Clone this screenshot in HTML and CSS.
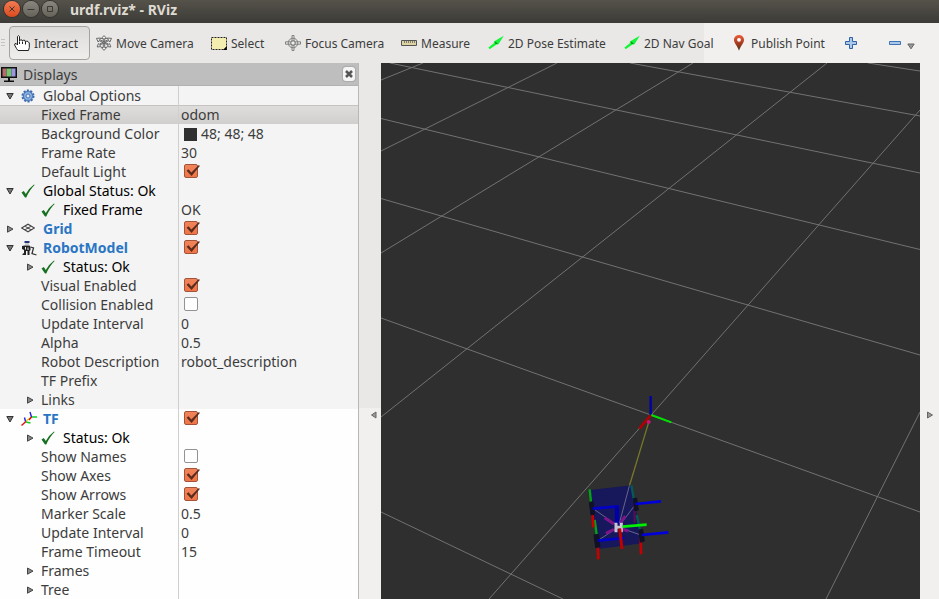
FILE: index.html
```html
<!DOCTYPE html>
<html lang="en">
<head>
<meta charset="utf-8">
<title>urdf.rviz* - RViz</title>
<link rel="stylesheet" href="styles.css">
</head>
<body>
<svg class="defs" aria-hidden="true">
  <symbol id="check" viewBox="0 0 14 14"><path d="M.5 8.500 2.800 7 4.800 10Q8 4 13 .4L13.600 1.100Q9 5.500 5.300 13.400L4 13.400Z" fill="#17701f"/></symbol>
  <symbol id="open" viewBox="0 0 8 8"><path d="M.8 1.500H7.200L4 7Z" fill="#777" stroke="#333" stroke-width="1"/></symbol>
  <symbol id="closed" viewBox="0 0 8 8"><path d="M1.500 1V7.200L7 4.100Z" fill="#888" stroke="#444" stroke-width="1"/></symbol>
  <symbol id="arrow" viewBox="0 0 16 16"><path d="M.4 12.600 6 8 5.800 6.500 15.800.8 10.500 9.200 8.600 9.400 1.600 14.200Z" fill="#16f43a"/><path d="M6.800 6.200 10 8.800 7.500 9Z" fill="#067d18"/></symbol>
</svg>

<header class="titlebar">
  <button class="win close" aria-label="Close"><svg viewBox="0 0 16 16"><path d="M5.500 5.500 10.500 10.500M10.500 5.500 5.500 10.500"/></svg></button>
  <button class="win" aria-label="Minimize"><svg viewBox="0 0 16 16"><path d="M4.500 8.500H11.500"/></svg></button>
  <button class="win" aria-label="Maximize"><svg viewBox="0 0 16 16"><path d="M5.500 5.500H10.500V10.500H5.500Z"/></svg></button>
  <h1>urdf.rviz* - RViz</h1>
</header>

<nav class="toolbar" aria-label="Tools">
  <span class="grip"></span>
  <button class="tool active"><svg viewBox="0 0 16 16"><path d="M3.500 10V1.500Q4.500-.3 5.500 1.500V6L6.500 4.800 8 5 8.500 6 9.500 5 11 5.500 11.500 7 12.500 6 14 6.500 15.300 8V12.500L14.500 15.500H4L2.500 13.500.6 10 1 8.600 2.300 8.600Z" fill="#fff" stroke="#222"/><path d="M5.500 6.500V9M8.500 6.500V9M11.500 7V9.500" stroke="#222" fill="none"/></svg>Interact</button>
  <button class="tool"><svg viewBox="0 0 16 16"><g fill="#f4f4f4" stroke="#5a5a5a" stroke-width=".9"><path d="M7.300 3.500H5.300L8 .6 10.700 3.500H8.700V12.500H10.700L8 15.400 5.300 12.500H7.300Z"/><path d="M3 5.500 12.200 10 11.200 11.600 14.800 12 13.600 8.600 12.800 9.300 3.600 4.600 4.600 3 .5 3.400 2.200 7Z"/><path d="M13 5.500 3.800 10 4.800 11.600 1.200 12 2.400 8.600 3.200 9.300 12.400 4.600 11.400 3 15.500 3.400 13.800 7Z"/></g></svg>Move Camera</button>
  <button class="tool"><svg viewBox="0 0 16 16"><path d="M.5 2.500H15.500V14.500H.5Z" fill="#f3edb0" stroke="#222" stroke-dasharray="2 1"/><path d="M15.800 11V15H12Z"/></svg>Select</button>
  <button class="tool"><svg viewBox="0 0 16 16"><g fill="none" stroke="#808080"><path d="M7 .5H9V6.800H15.500V9.200H9V15.500H7V9.200H.5V6.800H7Z" fill="#eee"/><circle cx="8" cy="8" r="4.800"/><circle cx="8" cy="8" r="2.400"/></g></svg>Focus Camera</button>
  <button class="tool"><svg viewBox="0 0 16 16"><path d="M.5 5.500H15.500V10.500H.5Z" fill="#ddd3a0" stroke="#555"/><path d="M3.500 6V8M5.500 6V8M7.500 6V8M9.500 6V8M11.500 6V8M13.500 6V8" stroke="#666" stroke-width=".8"/></svg>Measure</button>
  <button class="tool"><svg><use href="#arrow"/></svg>2D Pose Estimate</button>
  <button class="tool"><svg><use href="#arrow"/></svg>2D Nav Goal</button>
  <button class="tool"><svg viewBox="0 0 16 16"><defs><linearGradient id="pin" x1="0" y1="0" x2="0" y2="1"><stop offset="0" stop-color="#ef5c3c"/><stop offset=".55" stop-color="#a23a20"/><stop offset="1" stop-color="#4a3010"/></linearGradient></defs><path d="M8 0C5 0 3 2.200 3 5 3 8 6.500 11 8 15.800 9.500 11 13 8 13 5 13 2.200 11 0 8 0Z" fill="url(#pin)"/><circle cx="8" cy="4.800" r="1.900" fill="#fff"/></svg>Publish Point</button>
  <button class="tool" aria-label="Add tool"><svg viewBox="0 0 16 16"><path d="M6.500 2.500H9.500V6.500H13.500V9.500H9.500V13.500H6.500V9.500H2.500V6.500H6.500Z" fill="#a9c8ea" stroke="#2f62a5"/></svg></button>
  <button class="tool" aria-label="Remove tool"><svg viewBox="0 0 16 16"><path d="M2.500 6.500H13.500V9.500H2.500Z" fill="#a9c8ea" stroke="#3f72b5"/></svg></button>
  <button class="more" aria-label="More tools"><svg viewBox="0 0 8 8"><path d="M.8 2H7.200L4 6.800Z" fill="#999" stroke="#666"/></svg></button>
</nav>

<main class="workspace">
  <section class="panel" aria-label="Displays">
    <header class="panel-head">
      <svg class="monitor" viewBox="0 0 18 17"><path d="M1 1H17V12H1Z" fill="#111"/><path d="M2.500 2.500H6.500V10.500H2.500Z" fill="#b86a6a"/><path d="M6.500 2.500H11.500V10.500H6.500Z" fill="#74c474"/><path d="M11.500 2.500H15.500V10.500H11.500Z" fill="#9a98dc"/><path d="M8 12H10V14.500H14V16H4V14.500H8Z" fill="#111"/></svg>
      <h2>Displays</h2>
      <button class="panel-close" aria-label="Close panel"><svg viewBox="0 0 12 12"><path d="M3 3 9 9M9 3 3 9" stroke="#555" stroke-width="2.600"/></svg></button>
    </header>
    <table class="tree">
      <colgroup><col class="name-col"><col></colgroup>
      <tbody>
        <tr><th><div class="lv0"><svg class="tw"><use href="#open"/></svg><svg class="ic" viewBox="0 0 14 14"><circle cx="7" cy="7" r="5.500" fill="#8db1de" stroke="#3c6cad" stroke-width="2" stroke-dasharray="2 1.450"/><circle cx="7" cy="7" r="4.500" fill="#8db1de" stroke="#4a78b6"/><circle cx="7" cy="7" r="2" fill="#dbe8f6" stroke="#4a78b6"/></svg>Global Options</div></th><td></td></tr>
        <tr class="selected"><th><div class="leaf">Fixed Frame</div></th><td>odom</td></tr>
        <tr><th><div class="leaf">Background Color</div></th><td><span class="swatch"></span>48; 48; 48</td></tr>
        <tr><th><div class="leaf">Frame Rate</div></th><td>30</td></tr>
        <tr><th><div class="leaf"><label for="c1">Default Light</label></div></th><td><input id="c1" type="checkbox" checked></td></tr>
        <tr class="status"><th><div class="lv0"><svg class="tw"><use href="#open"/></svg><svg class="ic"><use href="#check"/></svg>Global Status: Ok</div></th><td></td></tr>
        <tr class="status"><th><div class="leaf"><svg class="ic"><use href="#check"/></svg>Fixed Frame</div></th><td>OK</td></tr>
        <tr class="display"><th><div class="lv0"><svg class="tw"><use href="#closed"/></svg><svg class="ic" viewBox="0 0 14 14"><path d="M.6 6 7 2.200 13.400 6 7 9.800ZM3.800 4.100 10.200 7.900M10.200 4.100 3.800 7.900" fill="none" stroke="#444" stroke-width="1.100"/></svg><label for="c2">Grid</label></div></th><td><input id="c2" type="checkbox" checked></td></tr>
        <tr class="display"><th><div class="lv0"><svg class="tw"><use href="#open"/></svg><svg class="ic robot" viewBox="0 0 16 16"><path d="M3.500 1H8.500V3H3.500Z" fill="#27347e"/><path d="M4 3H8V5H4Z" fill="#ccc"/><path d="M1 6 3.500 5.500H8.500L9.500 7V10L8.500 11V15H6.500V11H5V15H1.500V14L3 13V10L1 9Z" fill="#222"/><path d="M4.500 7V9.500M7 7.500V10" stroke="#eee"/><path d="M9.500 7 12.500 8 11 13.500 15.500 15" fill="none" stroke="#333" stroke-width="1.300"/></svg><label for="c3">RobotModel</label></div></th><td><input id="c3" type="checkbox" checked></td></tr>
        <tr class="status"><th><div class="lv1"><svg class="tw"><use href="#closed"/></svg><svg class="ic"><use href="#check"/></svg>Status: Ok</div></th><td></td></tr>
        <tr><th><div class="leaf"><label for="c4">Visual Enabled</label></div></th><td><input id="c4" type="checkbox" checked></td></tr>
        <tr><th><div class="leaf"><label for="c5">Collision Enabled</label></div></th><td><input id="c5" type="checkbox"></td></tr>
        <tr><th><div class="leaf">Update Interval</div></th><td>0</td></tr>
        <tr><th><div class="leaf">Alpha</div></th><td>0.5</td></tr>
        <tr><th><div class="leaf">Robot Description</div></th><td>robot_description</td></tr>
        <tr><th><div class="leaf">TF Prefix</div></th><td></td></tr>
        <tr><th><div class="lv1"><svg class="tw"><use href="#closed"/></svg>Links</div></th><td></td></tr>
      </tbody>
      <tbody class="light">
        <tr class="display"><th><div class="lv0"><svg class="tw"><use href="#open"/></svg><svg class="ic robot" viewBox="0 0 16 16"><g fill="none" stroke-width="1.400"><path d="M10.500 6 5 10" stroke="#e8d020"/><path d="M10.500 6H16M5 11 9.500 12" stroke="#10d020"/><path d="M10.500 6 9 1M4.500 10.500 3.500 6.500" stroke="#2020e0"/><path d="M10.500 6 8 9M5 10.500.5 14.500" stroke="#e01010"/></g></svg><label for="c6">TF</label></div></th><td><input id="c6" type="checkbox" checked></td></tr>
        <tr class="status"><th><div class="lv1"><svg class="tw"><use href="#closed"/></svg><svg class="ic"><use href="#check"/></svg>Status: Ok</div></th><td></td></tr>
        <tr><th><div class="leaf"><label for="c7">Show Names</label></div></th><td><input id="c7" type="checkbox"></td></tr>
        <tr><th><div class="leaf"><label for="c8">Show Axes</label></div></th><td><input id="c8" type="checkbox" checked></td></tr>
        <tr><th><div class="leaf"><label for="c9">Show Arrows</label></div></th><td><input id="c9" type="checkbox" checked></td></tr>
        <tr><th><div class="leaf">Marker Scale</div></th><td>0.5</td></tr>
        <tr><th><div class="leaf">Update Interval</div></th><td>0</td></tr>
        <tr><th><div class="leaf">Frame Timeout</div></th><td>15</td></tr>
        <tr><th><div class="lv1"><svg class="tw"><use href="#closed"/></svg>Frames</div></th><td></td></tr>
        <tr><th><div class="lv1"><svg class="tw"><use href="#closed"/></svg>Tree</div></th><td></td></tr>
      </tbody>
    </table>
  </section>

  <button class="splitter left" aria-label="Collapse left panel"><svg viewBox="0 0 8 8"><path d="M6 1V7L1.500 4Z" fill="#999" stroke="#666"/></svg></button>

  <svg class="scene" viewBox="0 0 539 536" preserveAspectRatio="xMinYMin slice" role="img" aria-label="3D view">
    <g stroke="#727272" fill="none">
      <path d="M487 0 539 8M249 0 539 53M9 0 539 110M0 55.500 539 186.500M0 135.500 539 292M0 255 270 352 539 449M0 449 182 536"/>
      <path d="M42 0 0 17M176 0 0 88M312 0 0 190M446 0 0 354M539 47 108 536M539 349 445 536"/>
    </g>
    <g transform="translate(189 317) scale(.33333)" fill="none">
      <path d="M236 127 178 318" stroke="#77772a" stroke-width="4"/>
      <path d="M60 330 185 316 217 490 85 507Z" fill="#17175c"/>
      <path d="M178 318 148 430M68 385 140 435M195 375 150 435M83 482 140 445M212 465 155 445" stroke="#66668a" stroke-width="3"/>
      <path d="M104 413 132 432M166 408 152 428M108 460 132 448M155 447 175 453" stroke="#7d1689" stroke-width="9"/>
      <path d="M242 108V48" stroke="#0000a6" stroke-width="7"/>
      <path d="M243 105 208 146" stroke="#b00000" stroke-width="8"/>
      <path d="M244 105 304 127" stroke="#00e400" stroke-width="6"/>
      <circle cx="236" cy="126" r="6" fill="#c01873"/>
      <path d="M59 328 64 375M74 420 82 478" stroke="#00a514" stroke-width="7"/>
      <path d="M184 316 194 370M200 405 212 460" stroke="#045a55" stroke-width="7"/>
      <path d="M194 370V428" stroke="#55104f" stroke-width="7"/>
      <path d="M67 388 70 442M83 490 85 538M212 475 213 523" stroke="#c50000" stroke-width="8"/>
      <path d="M58 367 69 365 74 403 63 405ZM72 465 86 463 90 500 77 503ZM190 356 200 354 205 390 194 392ZM207 450 218 448 223 483 211 487Z" fill="#111125" stroke="#111125" stroke-width="3"/>
      <path d="M68 386 146 379M83 482 163 474" stroke="#0000c8" stroke-width="8"/>
      <path d="M141 378V432" stroke="#0000a8" stroke-width="13"/>
      <path d="M196 372 273 364M215 465 295 457" stroke="#0000dc" stroke-width="8"/>
      <path d="M138 428V457M154 428V457M138 442H154" stroke="#c9c4d2" stroke-width="9"/>
      <path d="M158 440 230 434" stroke="#00f000" stroke-width="8"/>
      <path d="M149 445 156 507" stroke="#c00000" stroke-width="9"/>
    </g>
  </svg>

  <button class="splitter right" aria-label="Expand right panel"><svg viewBox="0 0 8 8"><path d="M1.500 1V7L6.500 4Z" fill="#999" stroke="#666"/></svg></button>
</main>
</body>
</html>
```
FILE: styles.css
```css
* { box-sizing: border-box; }

body {
  margin: 0;
  height: 100vh;
  display: flex;
  flex-direction: column;
  overflow: hidden;
  background: #f1f0ef;
  color: #3c3c3c;
  font: 14px/19px "Noto Sans", sans-serif;
}

button {
  margin: 0;
  padding: 0;
  border: 0;
  background: none;
  color: inherit;
  font: inherit;
}

svg { display: block; flex: none; }
.defs { position: absolute; width: 0; height: 0; }

.titlebar {
  flex: none;
  display: flex;
  align-items: flex-start;
  gap: 3px;
  height: 23px;
  padding: 1px 4px;
  background: linear-gradient(#55524a, #3c3b37);
}
.titlebar h1 {
  margin: 0 0 0 9px;
  color: #dfdbd2;
  font-size: 14px;
  line-height: 17px;
}
.win {
  width: 16px;
  height: 16px;
  border-radius: 50%;
  background: linear-gradient(#8a877e, #65625a);
  box-shadow: 0 0 0 1px #33322e;
}
.win.close { background: linear-gradient(#f37b53, #dc4a1c); }
.win path { fill: none; stroke: #3a3935; stroke-width: 1; }

.toolbar {
  flex: none;
  display: grid;
  grid-template-columns: 9px 82px 115px 74px 116px 87px 136px 107px 112px 44px 24px 1fr;
  align-items: center;
  height: 40px;
  background: linear-gradient(90deg, #e9e8e6 75%, #f1f0ef 75%);
  font-size: 12px;
}
.grip {
  width: 4px;
  height: 8px;
  margin-left: 1px;
  background: repeating-linear-gradient(#c4c3c1 0 1px, transparent 1px 3px);
}
.tool {
  display: flex;
  align-items: center;
  gap: 4px;
  height: 34px;
  padding-left: 5px;
  white-space: nowrap;
}
.tool svg { width: 16px; height: 16px; }
.tool.active {
  margin-right: 1px;
  border: 1px solid #a5a3a0;
  border-radius: 4px;
  padding-left: 4px;
  background: linear-gradient(#dcdbd9, #efeeed);
}
.more { justify-self: start; padding: 6px 0 0 1px; }
.more svg { width: 8px; height: 8px; }

.workspace {
  flex: 1;
  min-height: 0;
  display: grid;
  grid-template-columns: 359px 22px 1fr 19px;
}
.panel {
  min-width: 0;
  overflow: hidden;
  border-right: 1px solid #b9b7b4;
  background: #fff;
}
.panel-head {
  display: flex;
  align-items: center;
  height: 23px;
  padding-right: 3px;
  background: #bebebe;
  border-bottom: 1px solid #b2b2b2;
}
.panel-head h2 {
  flex: 1;
  margin: 0 0 0 5px;
  font-size: 14px;
  font-weight: 400;
}
.monitor { width: 18px; height: 17px; }
.panel-close {
  width: 12px;
  height: 14px;
  border-radius: 3px;
  background: #f5f5f5;
  box-shadow: 0 0 1px 1px #aaa;
}
.panel-close svg { width: 12px; height: 12px; }

.tree {
  width: 100%;
  table-layout: fixed;
  border-collapse: separate;
  border-spacing: 0;
  background: #f4f4f4;
}
.name-col { width: 179px; }
.light { background: #fefefe; }
.tree th, .tree td {
  height: 19px;
  padding: 0;
  text-align: left;
  font-weight: 400;
  white-space: nowrap;
}
.tree th { border-right: 1px solid #cfcfcf; }
.tree td { padding-left: 2px; }
.tree th div { display: flex; align-items: center; height: 19px; }
.lv0 { padding-left: 6px; }
.lv1 { padding-left: 26px; }
.leaf { padding-left: 41px; }
.tw { width: 8px; height: 8px; margin-right: 7px; }
.ic { width: 14px; height: 14px; margin-right: 8px; }
.robot { width: 16px; height: 16px; margin-right: 6px; }
.selected { background: linear-gradient(#dfdedc, #d0cfcd); box-shadow: inset 0 1px #c4c3c1; }
.status th { color: #000; }
.display label { color: #2a76c4; font-weight: 700; }
.swatch {
  display: inline-block;
  width: 13px;
  height: 13px;
  margin: 0 4px 0 3px;
  vertical-align: -2px;
  background: #303030;
}

input[type="checkbox"] {
  appearance: none;
  display: block;
  position: relative;
  width: 14px;
  height: 14px;
  margin: 0 0 1px 3px;
  border: 1px solid #929292;
  border-radius: 2px;
  background: #fff;
}
input[type="checkbox"]:checked {
  border-color: #a4533a;
  background: linear-gradient(#f0845a, #ee7548);
}
input[type="checkbox"]:checked::before {
  content: "";
  position: absolute;
  left: 1px;
  top: 0;
  width: 14px;
  height: 12px;
  background: #5a2c1c;
  clip-path: polygon(4% 48%, 18% 36%, 38% 62%, 90% 2%, 100% 6%, 40% 92%);
}

.splitter {
  display: flex;
  align-items: center;
  padding-top: 168px;
}
.splitter svg { width: 8px; height: 8px; }
.splitter.left {
  padding-left: 11px;
  background: linear-gradient(#e9e8e6 345px, #f1f0ef 345px);
}
.splitter.right { padding-left: 6px; }

.scene {
  width: 100%;
  height: 100%;
  min-height: 0;
  background: #2f2f2f;
}
```
